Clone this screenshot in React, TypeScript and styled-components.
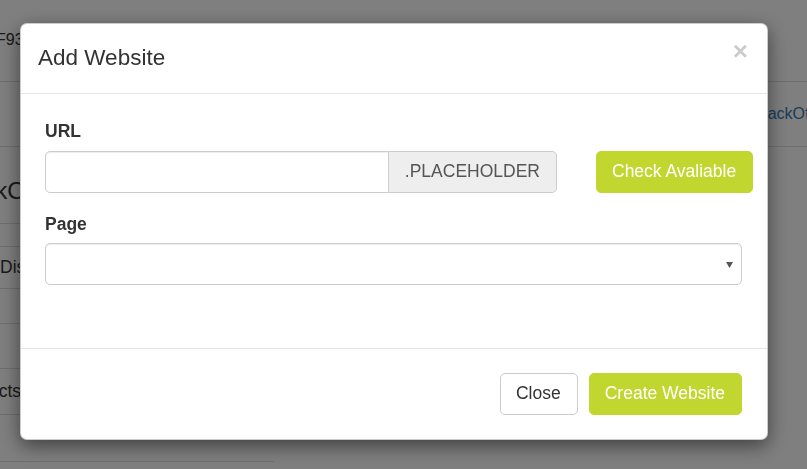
import React from "react";
import styled, { createGlobalStyle } from "styled-components";

const Global = createGlobalStyle`
  html, body {
    margin: 0;
    padding: 0;
    background: #fff;
    font-family: "Liberation Sans", Arial, sans-serif;
    overflow: hidden;
  }
  * { box-sizing: border-box; }
`;

/* ---------- page behind the backdrop ---------- */
const Page = styled.div`
  position: relative;
  width: 807px;
  height: 469px;
  overflow: hidden;
  background: #fff;
  color: #333;
`;

const TopBar = styled.div`
  height: 82px;
  border-bottom: 1px solid #dedede;
  display: flex;
  align-items: center;
  padding-bottom: 2px;
`;

const Crumb = styled.span<{ $shift: number; $size?: number }>`
  display: inline-block;
  white-space: nowrap;
  margin-left: ${(p) => p.$shift}px;
  font-size: ${(p) => p.$size ?? 18}px;
`;

const SubBar = styled.div`
  height: 65px;
  border-bottom: 1px solid #dedede;
  display: flex;
  align-items: center;
`;

const NavLink = styled.a<{ $shift: number }>`
  margin-left: ${(p) => p.$shift}px;
  font-size: 16px;
  color: #337ab7;
  text-decoration: none;
  white-space: nowrap;
`;

const Sidebar = styled.div`
  width: 274px;
  display: flex;
  flex-direction: column;
`;

const SideHeading = styled.div`
  height: 77px;
  border-bottom: 1px solid #dedede;
  display: flex;
  align-items: center;
  padding-top: 12px;
  margin-bottom: 22px;
`;

const ListGroup = styled.div`
  border-top: 1px solid #dedede;
  display: flex;
  flex-direction: column;
`;

const ListItem = styled.div<{ $h: number }>`
  height: ${(p) => p.$h}px;
  border-bottom: 1px solid #dedede;
  display: flex;
  align-items: center;
  font-size: 17.5px;
`;

/* ---------- modal ---------- */
const Backdrop = styled.div`
  position: fixed;
  inset: 0;
  background: rgba(0, 0, 0, 0.5);
`;

const Modal = styled.div`
  position: fixed;
  top: 23px;
  left: 20px;
  width: 748px;
  background: #fff;
  border: 1px solid rgba(0, 0, 0, 0.2);
  border-radius: 7px;
  box-shadow: 0 6px 19px rgba(0, 0, 0, 0.5);
  display: flex;
  flex-direction: column;
  color: #333;
`;

const Header = styled.div`
  display: flex;
  justify-content: space-between;
  align-items: flex-start;
  padding: 18px 19px 19px 17px;
  border-bottom: 1px solid #e5e5e5;
`;

const Title = styled.h4`
  margin: 0;
  font-size: 22.5px;
  line-height: 32px;
  font-weight: 400;
  color: #333;
`;

const CloseX = styled.button`
  margin-top: -4px;
  padding: 0;
  border: 0;
  background: transparent;
  font-family: "Liberation Sans", Arial, sans-serif;
  font-size: 26px;
  font-weight: 700;
  line-height: 1;
  color: #000;
  opacity: 0.2;
  cursor: pointer;
`;

const Body = styled.div`
  padding: 25px 25px 44px 24px;
  display: flex;
  flex-direction: column;
`;

const FormGroup = styled.div`
  margin-bottom: 19px;
  display: flex;
  flex-direction: column;
`;

const Label = styled.label`
  font-size: 17.5px;
  line-height: 25px;
  font-weight: 700;
  margin-bottom: 6.5px;
  color: #333;
`;

const UrlRow = styled.div`
  display: flex;
  align-items: center;
  gap: 39px;
`;

const InputGroup = styled.div`
  display: flex;
  width: 512px;
  flex-shrink: 0;
  height: 42px;
`;

const TextInput = styled.input`
  flex: 1;
  min-width: 0;
  height: 42px;
  border: 1px solid #ccc;
  border-radius: 5px 0 0 5px;
  box-shadow: inset 0 1px 1px rgba(0, 0, 0, 0.075);
  padding: 0 15px;
  font-size: 17.5px;
  font-family: inherit;
  outline: none;
`;

const Addon = styled.span`
  display: flex;
  align-items: center;
  height: 42px;
  padding: 0 16px;
  background: #eee;
  border: 1px solid #ccc;
  border-left: 0;
  border-radius: 0 5px 5px 0;
  color: #555;
  font-size: 17.5px;
  white-space: nowrap;
`;

const Button = styled.button<{ $variant: "primary" | "default" }>`
  flex-shrink: 0;
  height: 42px;
  padding: 0 16px 0 15px;
  border-radius: 5px;
  font-family: "Liberation Sans", Arial, sans-serif;
  font-size: 17.5px;
  line-height: 1;
  white-space: nowrap;
  cursor: pointer;
  border: 1px solid ${(p) => (p.$variant === "primary" ? "#c1d72f" : "#ccc")};
  background: ${(p) => (p.$variant === "primary" ? "#c1d72f" : "#fff")};
  color: ${(p) => (p.$variant === "primary" ? "#fff" : "#333")};
`;

const SelectWrap = styled.div`
  position: relative;
  width: 100%;
  height: 42px;
`;

const Select = styled.select`
  appearance: none;
  -webkit-appearance: none;
  width: 100%;
  height: 42px;
  border: 1px solid #ccc;
  border-radius: 5px;
  background: #fff;
  box-shadow: inset 0 1px 1px rgba(0, 0, 0, 0.075);
  padding: 0 15px;
  font-size: 17.5px;
  font-family: inherit;
  color: #555;
  outline: none;
`;

const Caret = styled.svg`
  position: absolute;
  right: 9px;
  top: 19px;
  pointer-events: none;
`;

const Footer = styled.div`
  border-top: 1px solid #e5e5e5;
  padding: 24px 25px 24px;
  display: flex;
  justify-content: flex-end;
  gap: 11px;
`;

export default function App() {
  return (
    <>
      <Global />
      <Page>
        <TopBar>
          <Crumb $shift={-4} $size={16}>F93</Crumb>
        </TopBar>
        <SubBar>
          <NavLink $shift={757} href="#">BackOffice</NavLink>
        </SubBar>
        <Sidebar>
          <SideHeading>
            <Crumb $shift={-46} $size={24}>BackOffice</Crumb>
          </SideHeading>
          <ListGroup>
            <ListItem $h={42}><Crumb $shift={0} $size={17.5}>Display</Crumb></ListItem>
            <ListItem $h={35} />
            <ListItem $h={45} />
            <ListItem $h={46}><Crumb $shift={-48} $size={17.5}>Products</Crumb></ListItem>
            <ListItem $h={47} />
          </ListGroup>
        </Sidebar>
      </Page>
      <Backdrop />
      <Modal role="dialog">
        <Header>
          <Title>Add Website</Title>
          <CloseX aria-label="Close">×</CloseX>
        </Header>
        <Body>
          <FormGroup>
            <Label>URL</Label>
            <UrlRow>
              <InputGroup>
                <TextInput type="text" />
                <Addon>.PLACEHOLDER</Addon>
              </InputGroup>
              <Button $variant="primary">Check Avaliable</Button>
            </UrlRow>
          </FormGroup>
          <FormGroup>
            <Label>Page</Label>
            <SelectWrap>
              <Select defaultValue="">
                <option value=""></option>
              </Select>
              <Caret width="7" height="6" viewBox="0 0 7 6">
                <path d="M0 0 H7 L3.5 6 Z" fill="#555" />
              </Caret>
            </SelectWrap>
          </FormGroup>
        </Body>
        <Footer>
          <Button $variant="default">Close</Button>
          <Button $variant="primary">Create Website</Button>
        </Footer>
      </Modal>
    </>
  );
}
